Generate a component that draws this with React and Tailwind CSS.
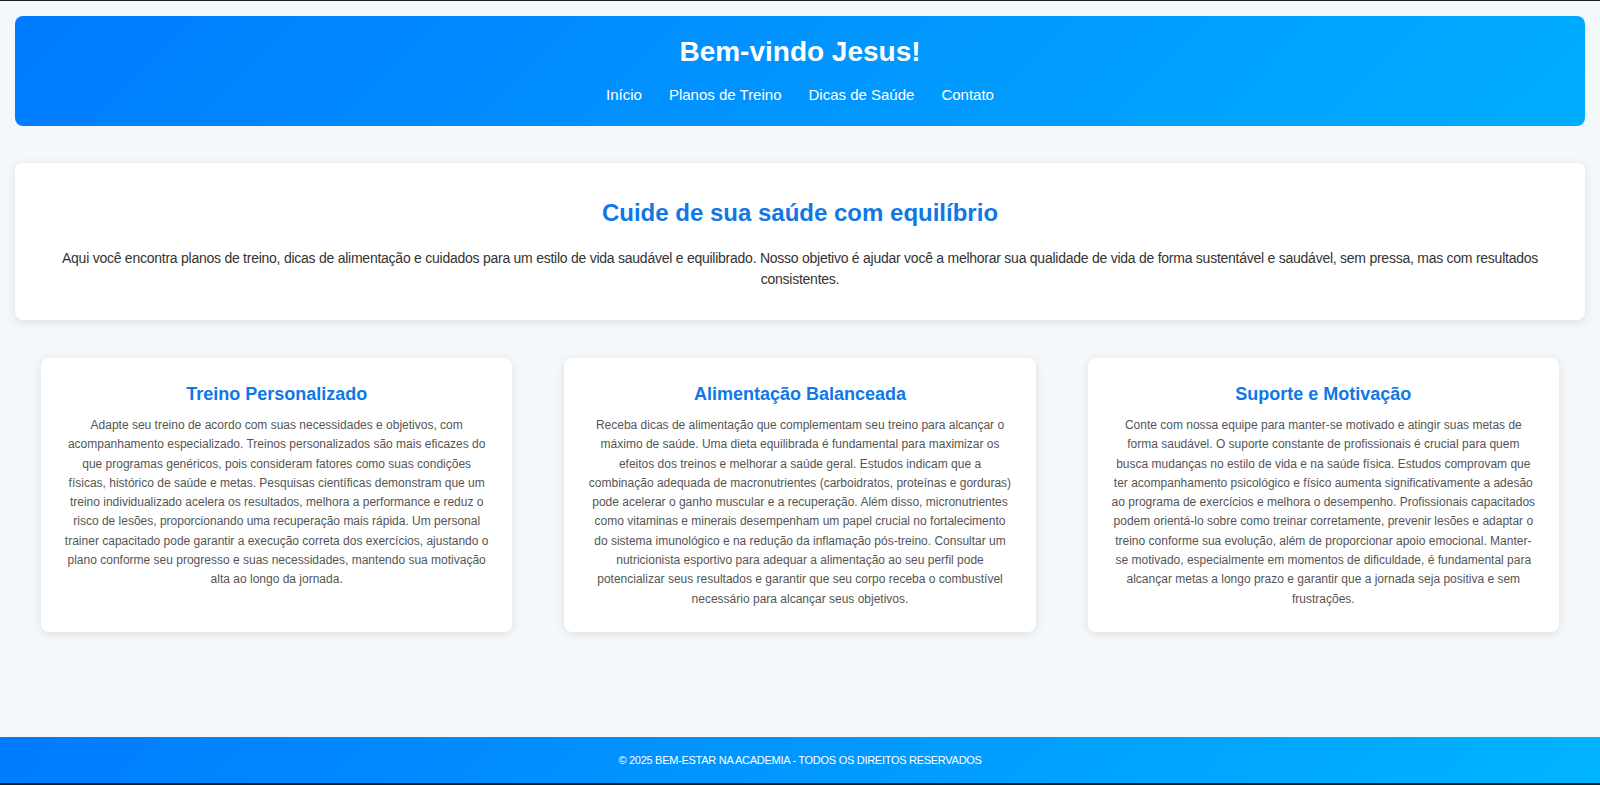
const links = ["Início", "Planos de Treino", "Dicas de Saúde", "Contato"]

const cards = [
  {
    title: "Treino Personalizado",
    text: "Adapte seu treino de acordo com suas necessidades e objetivos, com acompanhamento especializado. Treinos personalizados são mais eficazes do que programas genéricos, pois consideram fatores como suas condições físicas, histórico de saúde e metas. Pesquisas científicas demonstram que um treino individualizado acelera os resultados, melhora a performance e reduz o risco de lesões, proporcionando uma recuperação mais rápida. Um personal trainer capacitado pode garantir a execução correta dos exercícios, ajustando o plano conforme seu progresso e suas necessidades, mantendo sua motivação alta ao longo da jornada.",
  },
  {
    title: "Alimentação Balanceada",
    text: "Receba dicas de alimentação que complementam seu treino para alcançar o máximo de saúde. Uma dieta equilibrada é fundamental para maximizar os efeitos dos treinos e melhorar a saúde geral. Estudos indicam que a combinação adequada de macronutrientes (carboidratos, proteínas e gorduras) pode acelerar o ganho muscular e a recuperação. Além disso, micronutrientes como vitaminas e minerais desempenham um papel crucial no fortalecimento do sistema imunológico e na redução da inflamação pós-treino. Consultar um nutricionista esportivo para adequar a alimentação ao seu perfil pode potencializar seus resultados e garantir que seu corpo receba o combustível necessário para alcançar seus objetivos.",
  },
  {
    title: "Suporte e Motivação",
    text: "Conte com nossa equipe para manter-se motivado e atingir suas metas de forma saudável. O suporte constante de profissionais é crucial para quem busca mudanças no estilo de vida e na saúde física. Estudos comprovam que ter acompanhamento psicológico e físico aumenta significativamente a adesão ao programa de exercícios e melhora o desempenho. Profissionais capacitados podem orientá-lo sobre como treinar corretamente, prevenir lesões e adaptar o treino conforme sua evolução, além de proporcionar apoio emocional. Manter-se motivado, especialmente em momentos de dificuldade, é fundamental para alcançar metas a longo prazo e garantir que a jornada seja positiva e sem frustrações.",
  },
]

export default function App() {
  return (
    <div className="min-h-screen flex flex-col bg-[#f4f8fb] border-t border-b-2 border-[#1d2126] font-['Liberation_Sans',Arial,sans-serif]">
      {/* header */}
      <header className="mx-[15px] mt-[15px] h-[110px] rounded-lg bg-[linear-gradient(135deg,#007bff,#00aeff)] flex flex-col items-center pt-[20px] text-white">
        <h1 className="text-[28px] leading-[32px] font-bold">Bem-vindo Jesus!</h1>
        <nav className="mt-[18px] flex gap-[27px] text-[15px] leading-[18px]">
          {links.map((l) => (
            <a key={l} href="#" className="text-white">
              {l}
            </a>
          ))}
        </nav>
      </header>

      <main className="px-[15px] pt-[37px]">
        {/* intro */}
        <section className="bg-white rounded-lg shadow-[0_2px_10px_rgba(0,0,0,0.1)] px-[32px] pt-[36px] pb-[30px] text-center">
          <h2 className="text-[24px] leading-[28px] font-bold text-[#0f77e6]">
            Cuide de sua saúde com equilíbrio
          </h2>
          <p className="mt-[21px] text-[14px] leading-[21px] tracking-[-0.25px] text-[#333]">
            Aqui você encontra planos de treino, dicas de alimentação e cuidados para um estilo de vida saudável e equilibrado. Nosso objetivo é ajudar você a melhorar sua qualidade de vida de forma sustentável e saudável, sem pressa, mas com resultados consistentes.
          </p>
        </section>

        {/* cards */}
        <div className="mt-[38px] mx-[26px] flex gap-[52px]">
          {cards.map((c) => (
            <div
              key={c.title}
              className="flex-1 bg-white rounded-lg shadow-[0_2px_10px_rgba(0,0,0,0.1)] px-[22px] pt-[26px] pb-[23px] text-center"
            >
              <h3 className="text-[18px] leading-[21px] font-bold text-[#0f77e6]">{c.title}</h3>
              <p className="mt-[11px] text-[12px] leading-[19.3px] text-[#555]">{c.text}</p>
            </div>
          ))}
        </div>
      </main>

      <footer className="mt-auto h-[46px] bg-[linear-gradient(135deg,#007bff,#00b4ff)] flex items-center justify-center text-white text-[11px] tracking-[-0.28px]">
        © 2025 BEM-ESTAR NA ACADEMIA - TODOS OS DIREITOS RESERVADOS
      </footer>
    </div>
  )
}
